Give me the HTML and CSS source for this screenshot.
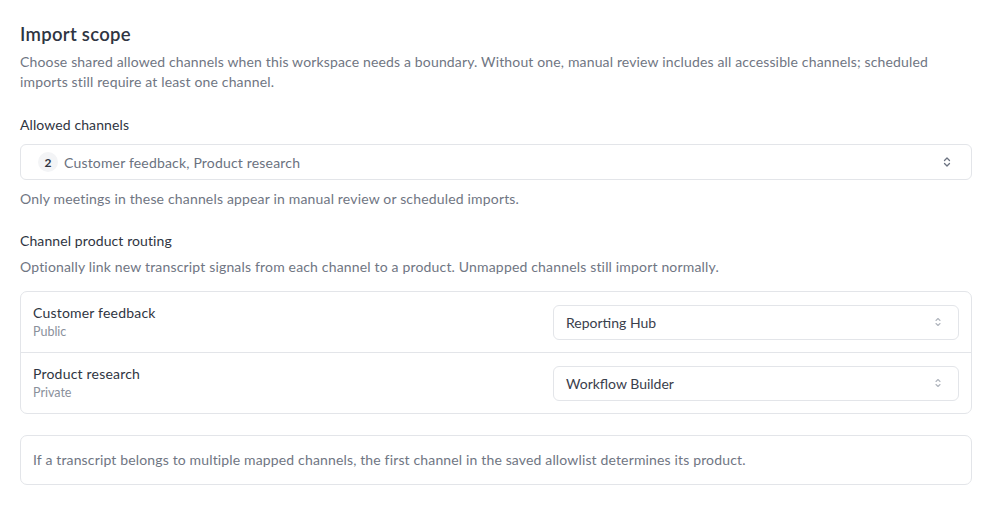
FILE: index.html
```html
<!DOCTYPE html>
<html lang="en">

<head>
    <meta charset="UTF-8">
    <meta name="viewport" content="width=device-width, initial-scale=1.0">
    <title>Import scope</title>
    <link rel="stylesheet" href="styles.css">
</head>

<body>
    <div class="page">
        <section class="section">
            <h2 class="title">Import scope</h2>
            <p class="desc">Choose shared allowed channels when this workspace needs a boundary. Without one, manual review includes all accessible channels; scheduled imports still require at least one channel.</p>
        </section>

        <section class="field">
            <div class="label">Allowed channels</div>
            <div class="select select-main">
                <span class="count">2</span>
                <span class="select-text">Customer feedback, Product research</span>
                <svg class="chevron" width="12" height="12" viewBox="0 0 12 12" fill="none">
                    <path d="M3.5 4.5 6 2l2.5 2.5M3.5 7.5 6 10l2.5-2.5" stroke="#6b7280" stroke-width="1.3" stroke-linecap="round" stroke-linejoin="round" />
                </svg>
            </div>
            <p class="hint">Only meetings in these channels appear in manual review or scheduled imports.</p>
        </section>

        <section class="field field-routing">
            <div class="label">Channel product routing</div>
            <p class="hint hint-top">Optionally link new transcript signals from each channel to a product. Unmapped channels still import normally.</p>

            <div class="routes">
                <div class="route">
                    <div class="route-info">
                        <div class="route-name">Customer feedback</div>
                        <div class="route-meta">Public</div>
                    </div>
                    <div class="select select-small">
                        <span class="select-text">Reporting Hub</span>
                        <svg class="chevron" width="10" height="12" viewBox="0 0 10 12" fill="none">
                            <path d="M3 4.5 5 2.5l2 2M3 7.5l2 2 2-2" stroke="#b0b5bd" stroke-width="1.1" stroke-linecap="round" stroke-linejoin="round" />
                        </svg>
                    </div>
                </div>
                <div class="route">
                    <div class="route-info">
                        <div class="route-name">Product research</div>
                        <div class="route-meta">Private</div>
                    </div>
                    <div class="select select-small">
                        <span class="select-text">Workflow Builder</span>
                        <svg class="chevron" width="10" height="12" viewBox="0 0 10 12" fill="none">
                            <path d="M3 4.5 5 2.5l2 2M3 7.5l2 2 2-2" stroke="#b0b5bd" stroke-width="1.1" stroke-linecap="round" stroke-linejoin="round" />
                        </svg>
                    </div>
                </div>
            </div>

            <div class="note">If a transcript belongs to multiple mapped channels, the first channel in the saved allowlist determines its product.</div>
        </section>
    </div>
</body>

</html>
```

FILE: styles.css
```css
body,
html {
    margin: 0;
    padding: 0;
    background-color: white;
    font-family: 'Lato', 'Noto Sans', sans-serif;
    color: #2f3542;
}

.page {
    padding: 21px 20px 20px 20px;
}

.title {
    margin: 0;
    font-size: 18.5px;
    font-weight: 600;
    line-height: 26px;
    letter-spacing: 0.3px;
    color: #2f3542;
}

.desc {
    margin: 5px 0 0 0;
    font-size: 14px;
    line-height: 20px;
    letter-spacing: 0.15px;
    color: #707683;
}

.field {
    margin-top: 23px;
}

.field-routing {
    margin-top: 22px;
}

.label {
    font-size: 14px;
    line-height: 20px;
    letter-spacing: 0.1px;
    color: #2f3542;
}

.select {
    display: flex;
    align-items: center;
    background: white;
    border: 1px solid #e3e5e9;
    border-radius: 6px;
    box-sizing: border-box;
}

.select-main {
    margin-top: 9px;
    height: 36px;
    padding: 0 18px 0 17px;
    font-size: 14px;
    letter-spacing: 0.18px;
    color: #6b7280;
}

.count {
    display: inline-flex;
    align-items: center;
    justify-content: center;
    width: 20px;
    height: 20px;
    border-radius: 50%;
    background: #f3f4f6;
    font-size: 12px;
    font-weight: 700;
    letter-spacing: 0;
    color: #2f3542;
    margin-right: 6px;
}

.select-text {
    flex: 1;
}

.hint {
    margin: 9px 0 0 0;
    font-size: 14px;
    line-height: 20px;
    letter-spacing: 0.17px;
    color: #707683;
}

.hint-top {
    margin-top: 6px;
}

.routes {
    margin-top: 14px;
    border: 1px solid #e3e5e9;
    border-radius: 7px;
}

.route {
    display: flex;
    align-items: center;
    justify-content: space-between;
    height: 60px;
    padding: 0 12px 0 12px;
    box-sizing: border-box;
}

.route+.route {
    border-top: 1px solid #e3e5e9;
    height: 61px;
}

.route-name {
    font-size: 14px;
    line-height: 18px;
    letter-spacing: 0.2px;
    color: #2f3542;
}

.route-meta {
    font-size: 12.5px;
    line-height: 16px;
    color: #8a909b;
    margin-top: 2px;
}

.select-small {
    width: 406px;
    height: 35px;
    padding: 0 15px 0 12px;
    font-size: 14px;
    color: #3a404c;
}

.note {
    margin-top: 21px;
    border: 1px solid #e3e5e9;
    border-radius: 7px;
    padding: 15px 12px;
    font-size: 14px;
    line-height: 18px;
    letter-spacing: 0.15px;
    color: #707683;
}
```
